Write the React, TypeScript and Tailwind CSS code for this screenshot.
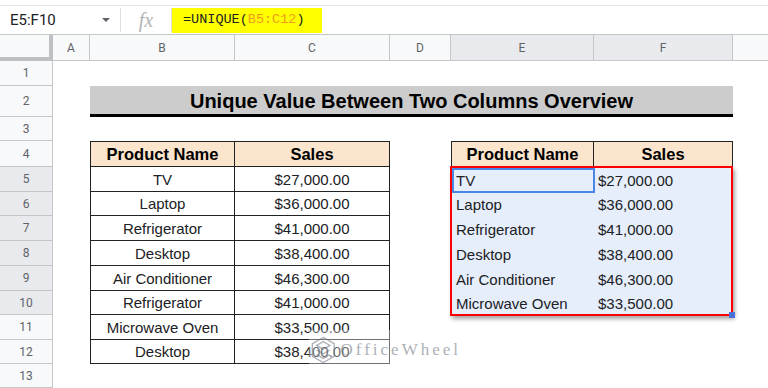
import React from 'react';

const sans = "font-['Liberation_Sans',Arial,sans-serif]";

const table1 = [
  ['TV', '$27,000.00'],
  ['Laptop', '$36,000.00'],
  ['Refrigerator', '$41,000.00'],
  ['Desktop', '$38,400.00'],
  ['Air Conditioner', '$46,300.00'],
  ['Refrigerator', '$41,000.00'],
  ['Microwave Oven', '$33,500.00'],
  ['Desktop', '$38,400.00'],
];

const unique = [
  ['TV', '$27,000.00'],
  ['Laptop', '$36,000.00'],
  ['Refrigerator', '$41,000.00'],
  ['Desktop', '$38,400.00'],
  ['Air Conditioner', '$46,300.00'],
  ['Microwave Oven', '$33,500.00'],
];

// heights of rows 5..12
const dataHeights = ['h-[25px]', 'h-[24px]', 'h-[25px]', 'h-[25px]', 'h-[25px]', 'h-[24px]', 'h-[25px]', 'h-[24px]'];

const Row = ({ n, h, hl, children }: { n: number; h: string; hl?: boolean; children?: React.ReactNode }) => (
  <div className={`flex ${h}`}>
    <div
      className={`w-[53px] shrink-0 flex items-center justify-center border-r border-b border-[#c4c7c5] text-[12px] text-[#5f6368] font-['Roboto',sans-serif] ${
        hl ? 'bg-[#e8eaed]' : 'bg-[#f8f9fa]'
      }`}
    >
      {n}
    </div>
    {children}
  </div>
);

const ColHead = ({ label, w, hl }: { label: string; w: string; hl?: boolean }) => (
  <div
    className={`${w} shrink-0 flex items-center justify-center border-r border-b border-[#c4c7c5] text-[12px] text-[#5f6368] font-['Roboto',sans-serif] ${
      hl ? 'bg-[#e8eaed]' : 'bg-[#f8f9fa]'
    }`}
  >
    {label}
  </div>
);

const HexLogo = () => (
  <svg width="34" height="34" viewBox="0 0 34 34" fill="none" stroke="#8a9099" strokeWidth="1.6">
    <path d="M17 2 L30 9.5 L30 24.5 L17 32 L4 24.5 L4 9.5 Z" />
    <path d="M17 7 L25 11.5 L17 16 L9 11.5 Z" />
    <path d="M9 17 L17 21.5 L25 17" />
    <path d="M9 22.5 L17 27 L25 22.5" />
  </svg>
);

export default function App() {
  return (
    <div className={`relative w-[768px] h-[388px] overflow-hidden bg-white ${sans}`}>
      {/* formula bar */}
      <div className="h-[34px] pt-[5px]">
        <div className="h-[29px] border-t border-[#e3e3e3] flex items-center">
          <div className="w-[120px] h-full flex items-center pl-[10px] pr-[10px] justify-between">
            <span className="text-[15px] text-[#202124] font-['Roboto',sans-serif]">E5:F10</span>
            <span className="w-0 h-0 border-l-[4px] border-r-[4px] border-t-[4px] border-l-transparent border-r-transparent border-t-[#5f6368]" />
          </div>
          <div className="w-px h-[24px] bg-[#e0e0e0]" />
          <div className="w-[50px] flex items-center justify-center">
            <span className="font-['Liberation_Serif',serif] italic text-[20px] text-[#b4b4b4] leading-none">fx</span>
          </div>
          <div className="w-px h-[24px] bg-[#e0e0e0]" />
          <div className="w-[150px] h-[25px] bg-[#ffff00] flex items-center pl-[11px] font-['Liberation_Mono',monospace] text-[13.5px] text-[#202124]">
            =UNIQUE(<span className="text-[#f09d1b]">B5:C12</span>)
          </div>
        </div>
      </div>

      {/* column headers */}
      <div className="flex h-[27px] border-t border-[#c4c7c5]">
        <div className="w-[53px] shrink-0 bg-[#f8f9fa] border-r-[4px] border-b-[4px] border-[#bdc1c6]" />
        <ColHead label="A" w="w-[37px]" />
        <ColHead label="B" w="w-[145px]" />
        <ColHead label="C" w="w-[155px]" />
        <ColHead label="D" w="w-[61px]" />
        <ColHead label="E" w="w-[143px]" hl />
        <ColHead label="F" w="w-[139px]" hl />
        <div className="flex-1 bg-[#f8f9fa] border-b border-[#c4c7c5]" />
      </div>

      <Row n={1} h="h-[25px]" />

      <Row n={2} h="h-[31px]">
        <div className="w-[37px] shrink-0" />
        <div className="w-[643px] shrink-0 bg-[#cccccc] border-b-[3px] border-black flex items-center justify-center pt-[2px] text-[20px] font-bold text-black">
          Unique Value Between Two Columns Overview
        </div>
      </Row>

      <Row n={3} h="h-[24px]" />

      <Row n={4} h="h-[26px]">
        <div className="w-[37px] shrink-0" />
        <div className="w-[145px] shrink-0 bg-[#fce5cd] border border-[#222] flex items-center justify-center text-[16.5px] font-bold text-black">
          Product Name
        </div>
        <div className="w-[155px] shrink-0 bg-[#fce5cd] border-y border-r border-[#222] flex items-center justify-center text-[16.5px] font-bold text-black">
          Sales
        </div>
        <div className="w-[61px] shrink-0" />
        <div className="w-[143px] shrink-0 bg-[#fce5cd] border border-[#222] flex items-center justify-center text-[16.5px] font-bold text-black">
          Product Name
        </div>
        <div className="w-[139px] shrink-0 bg-[#fce5cd] border-y border-r border-[#222] flex items-center justify-center text-[16.5px] font-bold text-black">
          Sales
        </div>
      </Row>

      {table1.map(([name, sales], i) => {
        const u = unique[i];
        return (
          <Row key={i} n={i + 5} h={dataHeights[i]} hl={i < 6}>
            <div className="w-[37px] shrink-0" />
            <div className="w-[145px] shrink-0 border-x border-b border-[#222] flex items-end justify-center text-[15px] text-[#202124]">
              {name}
            </div>
            <div className="w-[155px] shrink-0 border-r border-b border-[#222] flex items-end justify-center text-[15px] text-[#202124]">
              {sales}
            </div>
            <div className="w-[61px] shrink-0" />
            {u ? (
              <>
                <div className="w-[143px] shrink-0 bg-[#e6eefb] flex items-end pl-[5px] text-[15px] text-[#202124]">{u[0]}</div>
                <div className="w-[139px] shrink-0 bg-[#e6eefb] flex items-end pl-[4px] text-[15px] text-[#202124]">{u[1]}</div>
              </>
            ) : null}
          </Row>
        );
      })}

      <Row n={13} h="h-[24px]" />

      {/* active cell E5 */}
      <div className="absolute left-[452px] top-[168px] w-[143px] h-[25px] border-2 border-[#4a86e8]" />
      {/* red annotation box over E5:F10 */}
      <div className="absolute left-[450px] top-[166px] w-[283px] h-[150px] border-2 border-[#ff0000] shadow-[2px_3px_4px_rgba(0,0,0,0.35)]" />
      <div className="absolute left-[729px] top-[312px] w-[6px] h-[6px] bg-[#4a6fd6]" />

      {/* watermark */}
      <div className="absolute left-[309px] top-[330px] w-[152px] h-[40px] bg-white/50 flex items-center gap-[3px] opacity-70">
        <HexLogo />
        <span className="font-['Liberation_Serif',serif] text-[17px] tracking-[3px] text-[#8a9099]">OfficeWheel</span>
      </div>
    </div>
  );
}
